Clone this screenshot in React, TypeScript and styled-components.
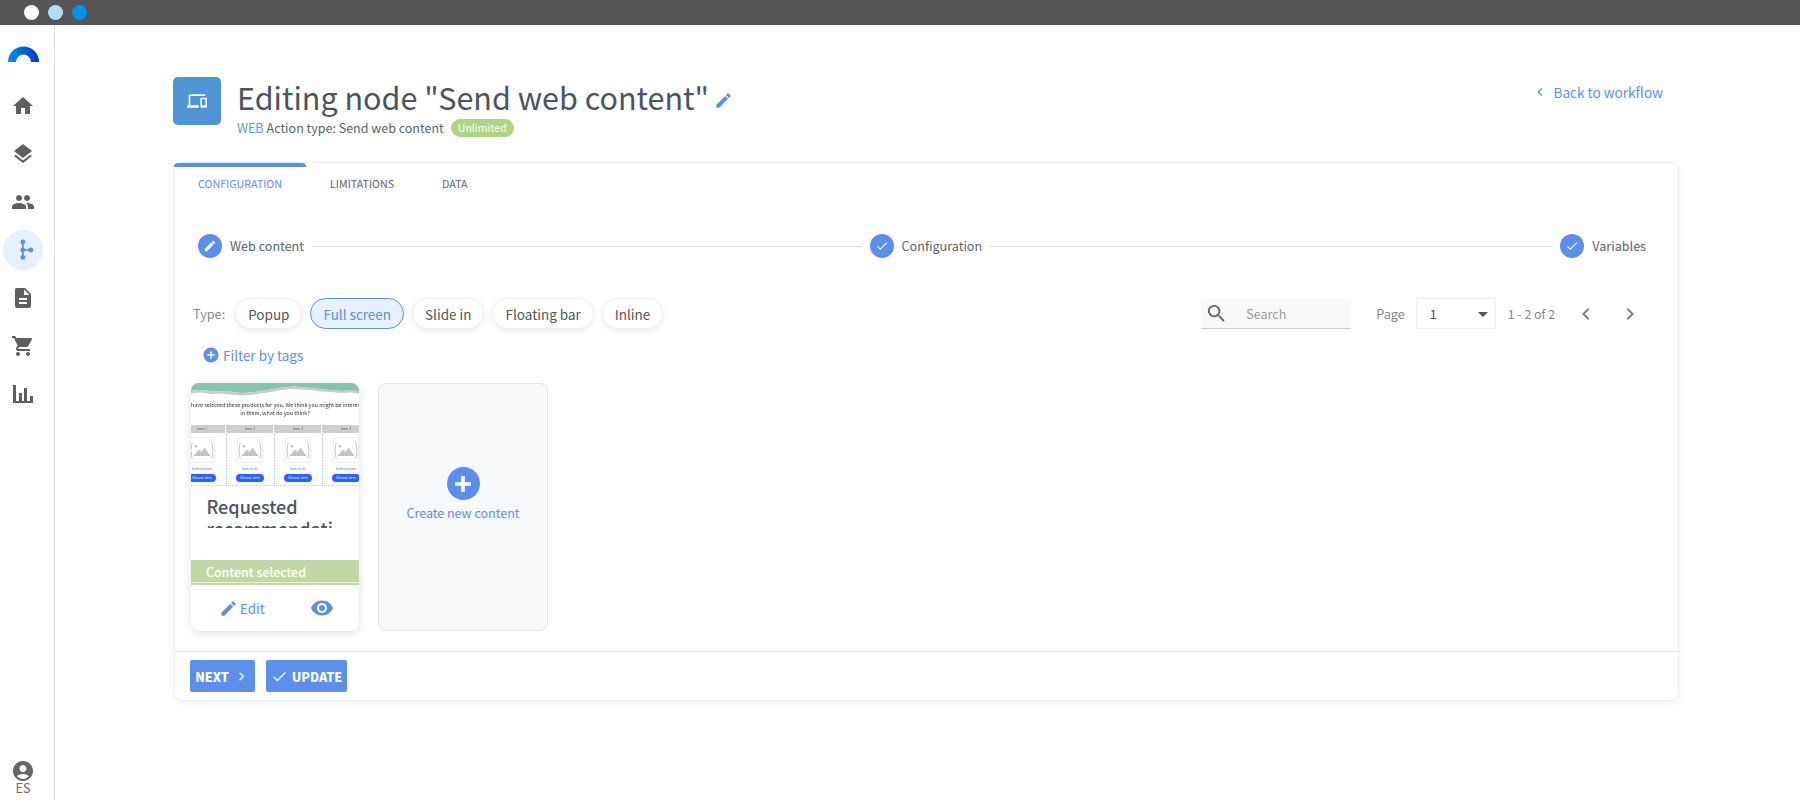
import styled, { createGlobalStyle } from 'styled-components';
import {
  MdAccountCircle,
  MdAddCircle,
  MdArrowDropDown,
  MdCheck,
  MdChevronLeft,
  MdChevronRight,
  MdDescription,
  MdDevices,
  MdEdit,
  MdHome,
  MdLayers,
  MdPeople,
  MdSearch,
  MdShoppingCart,
  MdVisibility,
} from 'react-icons/md';

const BLUE = '#5b8fec';
const FONT = '"Noto Sans CJK SC", "Noto Sans", sans-serif';

const GlobalStyle = createGlobalStyle`
  html, body {
    margin: 0;
    height: 100%;
    background: #fff;
    overflow: hidden;
  }
  body {
    font-family: ${FONT};
    color: #4a5560;
  }
  * {
    box-sizing: border-box;
  }
`;

// ventana y barra superior
const Screen = styled.div`
  display: flex;
  flex-direction: column;
  width: 1800px;
  height: 800px;
`;

const WindowBar = styled.div`
  display: flex;
  align-items: center;
  gap: 9px;
  flex: 0 0 25px;
  padding-left: 24px;
  background: #555555;
`;

const WindowDot = styled.span<{ $color: string }>`
  width: 15px;
  height: 15px;
  border-radius: 50%;
  background: ${(p) => p.$color};
`;

const Body = styled.div`
  display: flex;
  flex: 1;
  min-height: 0;
`;

const Sidebar = styled.nav`
  display: flex;
  flex-direction: column;
  flex: 0 0 55px;
  padding: 21px 0 0 3px;
  border-right: 1px solid #dddddd;
`;

const Logo = styled.svg`
  display: block;
  width: 31px;
  height: 16px;
  margin: 0 0 24px 5px;
`;

const NavList = styled.div`
  display: flex;
  flex-direction: column;
  gap: 8px;
`;

const NavItem = styled.div<{ $active?: boolean }>`
  display: flex;
  align-items: center;
  justify-content: center;
  width: 40px;
  height: 40px;
  border-radius: 50%;
  color: #5f5f5f;
  background: ${(p) => (p.$active ? '#e6f1fd' : 'transparent')};
  font-size: 24px;
`;

const UserBlock = styled.div`
  display: flex;
  flex-direction: column;
  align-items: center;
  width: 40px;
  margin-top: auto;
  padding-bottom: 5px;
  color: #666666;
  font-size: 24px;

  svg {
    display: block;
  }
`;

const UserCode = styled.span`
  margin-top: -2px;
  font-size: 12.6px;
  line-height: 14px;
`;

const Main = styled.main`
  flex: 1;
  padding: 52px 121px 0 119px;
`;

// cabecera del nodo
const Header = styled.header`
  display: flex;
  align-items: flex-start;
  height: 85px;
`;

const NodeIcon = styled.div`
  display: flex;
  align-items: center;
  justify-content: center;
  flex: 0 0 48px;
  height: 48px;
  margin: 0 16px 0 -1px;
  border-radius: 5px;
  background: #4f94d4;
  color: #fff;
  font-size: 20px;
`;

const HeaderText = styled.div`
  flex: 1;
`;

const TitleRow = styled.div`
  display: flex;
  align-items: center;
  gap: 5px;
  height: 42px;
`;

const Title = styled.h1`
  margin: -2px 0 0;
  font-size: 30.5px;
  font-weight: 400;
  line-height: 42px;
  color: #4a5560;
`;

const TitleEdit = styled.span`
  display: flex;
  color: ${BLUE};
  font-size: 19px;
  margin-top: 4px;
`;

const SubRow = styled.div`
  display: flex;
  align-items: center;
  height: 18px;
  font-size: 12.5px;
  line-height: 18px;
  color: #5a646e;
`;

const WebTag = styled.span`
  color: #5a9ae0;
  margin-right: 3px;
`;

const Badge = styled.span`
  display: inline-flex;
  align-items: center;
  height: 18px;
  margin-left: 7px;
  padding: 0 7px;
  border-radius: 9px;
  background: #aed581;
  color: #fff;
  font-size: 10.6px;
`;

const BackLink = styled.a`
  display: flex;
  align-items: center;
  gap: 4px;
  height: 18px;
  margin: 6px 16px 0 0;
  color: ${BLUE};
  font-size: 13.6px;
  line-height: 18px;
`;

const BackIcon = styled.span`
  display: flex;
  font-size: 16px;
  margin-right: 1px;
`;

// panel principal
const Panel = styled.section`
  display: flex;
  flex-direction: column;
  height: 539px;
  border: 1px solid #eeeeee;
  border-radius: 8px;
  box-shadow: 0 2px 8px rgba(0, 0, 0, 0.05);
`;

const Tabs = styled.div`
  display: flex;
  flex: 0 0 44px;
  margin-left: -1px;
`;

const Tab = styled.div<{ $active?: boolean }>`
  display: flex;
  align-items: center;
  padding: 0 24px 8px;
  border-top: 4px solid ${(p) => (p.$active ? BLUE : 'transparent')};
  border-radius: 4px 4px 0 0;
  color: ${(p) => (p.$active ? BLUE : '#5a646e')};
  font-size: 10.7px;
  text-transform: uppercase;
`;

const Stepper = styled.div`
  display: flex;
  align-items: center;
  gap: 8px;
  margin-top: 27px;
  padding: 0 32px 0 23px;
`;

const Step = styled.div`
  display: flex;
  align-items: center;
  gap: 8px;
  font-size: 12.6px;
  line-height: 24px;
  color: #5a646e;
`;

const StepCircle = styled.span`
  display: flex;
  align-items: center;
  justify-content: center;
  width: 24px;
  height: 24px;
  border-radius: 50%;
  background: ${BLUE};
  color: #fff;
  font-size: 14px;
`;

const StepLine = styled.div<{ $grow: number }>`
  flex: ${(p) => p.$grow} 1 0;
  height: 1px;
  background: #dddddd;
`;

const Toolbar = styled.div`
  display: flex;
  align-items: center;
  justify-content: space-between;
  height: 31px;
  margin-top: 40px;
  padding: 0 36px 0 18px;
`;

const TypeGroup = styled.div`
  display: flex;
  align-items: center;
  gap: 8px;
`;

const TypeLabel = styled.span`
  margin-right: 2px;
  color: #888888;
  font-size: 12.7px;
`;

const Pill = styled.button<{ $active?: boolean }>`
  height: 31px;
  padding: 0 12px;
  border: 1px solid ${(p) => (p.$active ? BLUE : '#f0f0f0')};
  border-radius: 16px;
  background: ${(p) => (p.$active ? '#e6f1fd' : '#fff')};
  box-shadow: ${(p) => (p.$active ? 'none' : '0 2px 6px rgba(0, 0, 0, 0.08)')};
  color: ${(p) => (p.$active ? BLUE : '#555555')};
  font-family: ${FONT};
  font-size: 13.5px;
`;

const PagerGroup = styled.div`
  display: flex;
  align-items: center;
`;

const SearchBox = styled.div`
  display: flex;
  align-items: center;
  width: 150px;
  height: 31px;
  margin-right: 25px;
  padding-left: 4px;
  border-bottom: 1px solid #cccccc;
  background: #f9f9f9;
  color: #666666;
  font-size: 23px;
`;

const SearchText = styled.span`
  margin-left: 18px;
  color: #999999;
  font-size: 12.6px;
`;

const PageLabel = styled.span`
  margin-right: 11px;
  color: #888888;
  font-size: 12.7px;
`;

const PageSelect = styled.div`
  display: flex;
  align-items: center;
  justify-content: space-between;
  width: 80px;
  height: 31px;
  margin-right: 12px;
  padding: 0 0 0 13px;
  border: 1px solid #eeeeee;
  color: #4a5560;
  font-size: 12.6px;
`;

const CaretIcon = styled.span`
  display: flex;
  color: #4a5560;
  font-size: 24px;
`;

const PageRange = styled.span`
  margin-right: 19px;
  color: #888888;
  font-size: 12.3px;
`;

const PagerButton = styled.span`
  display: flex;
  color: #808080;
  font-size: 24px;

  & + & {
    margin-left: 20px;
  }
`;

const FilterLink = styled.div`
  display: flex;
  align-items: center;
  gap: 3px;
  height: 20px;
  margin: 16px 0 0 27px;
  color: ${BLUE};
  font-size: 13.5px;
`;

const FilterIcon = styled.span`
  display: flex;
  font-size: 18px;
`;

const CardRow = styled.div`
  display: flex;
  gap: 19px;
  margin-top: 18px;
  padding-left: 16px;
`;

const ContentCard = styled.article`
  display: flex;
  flex-direction: column;
  width: 168px;
  height: 248px;
  border-radius: 8px;
  overflow: hidden;
  background: #fff;
  box-shadow: 0 2px 10px rgba(0, 0, 0, 0.12);
`;

// miniatura del contenido
const Thumb = styled.div`
  flex: 0 0 103px;
  overflow: hidden;
  border-bottom: 1px dotted #c8c8c8;
  filter: blur(0.25px);
`;

const TornEdge = styled.svg`
  display: block;
  width: 168px;
  height: 18px;
`;

const ThumbText = styled.div`
  display: flex;
  flex-direction: column;
  align-items: center;
  height: 24px;
  padding-top: 1px;
  color: #333333;
  font-size: 5.4px;
  line-height: 7.5px;
  white-space: nowrap;
  overflow: hidden;
`;

const ThumbTextStart = styled.span`
  align-self: flex-start;
`;

const ThumbColumns = styled.div`
  display: flex;
  justify-content: center;
`;

const ThumbColumn = styled.div`
  display: flex;
  flex-direction: column;
  align-items: center;
  flex: 0 0 48px;
  height: 61px;
  border-right: 1px dotted #bbbbbb;
  padding-right: 1px;
`;

const ThumbHeader = styled.div`
  align-self: stretch;
  height: 8px;
  background: #cdd0d2;
  color: #666666;
  font-size: 3.5px;
  line-height: 8px;
  text-align: center;
`;

const ThumbImage = styled.svg`
  display: block;
  width: 26px;
  height: 26px;
  margin-top: 4px;
`;

const ThumbLink = styled.div`
  margin-top: 3px;
  color: #4a74f0;
  font-size: 3.4px;
  line-height: 6px;
`;

const ThumbButton = styled.div`
  width: 28px;
  height: 8px;
  margin-top: 2px;
  border-radius: 4px;
  background: #2962ff;
  color: #fff;
  font-size: 3.4px;
  line-height: 8px;
  text-align: center;
  white-space: nowrap;
`;

const CardTitle = styled.h2`
  flex: 0 0 33px;
  height: 33px;
  margin: 9px 18px 0 15.5px;
  overflow: hidden;
  color: #4a5560;
  font-size: 18px;
  font-weight: 500;
  line-height: 22px;
  overflow-wrap: anywhere;
`;

const SelectedStrip = styled.div`
  display: flex;
  align-items: center;
  height: 25px;
  margin-top: auto;
  padding: 1px 15px 0;
  border-bottom: 2px solid #c3d7a4;
  box-shadow: inset 0 -1px 0 #e9f0dc;
  background: #c3d7a4;
  color: #fff;
  font-size: 12.4px;
  font-weight: 500;
`;

const CardActions = styled.div`
  display: flex;
  align-items: center;
  justify-content: space-between;
  flex: 0 0 46px;
  padding: 0 25px 0 28px;
  color: ${BLUE};
  font-size: 13.4px;
`;

const EditAction = styled.span`
  display: flex;
  align-items: center;
  gap: 2px;
`;

const ActionIcon = styled.span<{ $size: number }>`
  display: flex;
  font-size: ${(p) => p.$size}px;
`;

const CreateCard = styled.article`
  display: flex;
  flex-direction: column;
  align-items: center;
  width: 170px;
  height: 248px;
  padding-top: 83px;
  border: 1px solid #e6e6e6;
  border-radius: 8px;
  background: #f8f9fb;
  color: ${BLUE};
  font-size: 12.5px;
`;

const CreateCircle = styled.span`
  display: flex;
  align-items: center;
  justify-content: center;
  width: 33px;
  height: 33px;
  border-radius: 50%;
  background: ${BLUE};
`;

const CreateLabel = styled.span`
  margin-top: 3px;
  line-height: 20px;
`;

const Footer = styled.div`
  display: flex;
  align-items: center;
  gap: 11px;
  margin-top: auto;
  height: 49px;
  padding: 0 0 0 15px;
  border-top: 1px solid #e8e8e8;
`;

const ActionButton = styled.button`
  display: flex;
  align-items: center;
  justify-content: center;
  gap: 4px;
  height: 32px;
  padding: 0;
  border: none;
  border-radius: 2px;
  background: ${BLUE};
  color: #fff;
  font-family: ${FONT};
  font-size: 12.6px;
  font-weight: 900;
`;

const NextButton = styled(ActionButton)`
  width: 65px;
`;

const UpdateButton = styled(ActionButton)`
  width: 81px;
`;

const ButtonIcon = styled.span`
  display: flex;
  font-size: 17px;
`;

function WorkflowIcon() {
  return (
    <svg width="24" height="24" viewBox="0 0 24 24" fill={BLUE} aria-hidden="true">
      <rect x="10.9" y="4" width="1.8" height="16" />
      <rect x="12" y="11.1" width="8" height="1.8" />
      <circle cx="11.8" cy="3.9" r="2.4" />
      <circle cx="11.8" cy="12" r="2.4" />
      <circle cx="11.8" cy="19.4" r="2.4" />
      <circle cx="19.8" cy="12" r="2.4" />
    </svg>
  );
}

function ChartIcon() {
  return (
    <svg width="20" height="18" viewBox="0 0 20 18" fill="#5f5f5f" aria-hidden="true">
      <rect x="0" y="16" width="20" height="2" />
      <rect x="0" y="0" width="3" height="17" />
      <rect x="6" y="8" width="3" height="9" />
      <rect x="11" y="3" width="3" height="14" />
      <rect x="17" y="11" width="3" height="6" />
    </svg>
  );
}

function ThumbPlaceholder() {
  return (
    <ThumbImage viewBox="0 0 26 26" aria-hidden="true">
      <rect x="0.5" y="0.5" width="25" height="25" fill="#fff" stroke="#eeeeee" />
      <path d="M4 6 Q2.5 6 2.5 8 V12 L1.5 13.5 L2.5 15 V19 Q2.5 21 4 21" fill="none" stroke="#aaaaaa" strokeWidth="0.6" />
      <path d="M22 6 Q23.5 6 23.5 8 V12 L24.5 13.5 L23.5 15 V19 Q23.5 21 22 21" fill="none" stroke="#aaaaaa" strokeWidth="0.6" />
      <circle cx="7" cy="9.3" r="1.4" fill="#c0c5c9" />
      <path d="M4.5 19 L10 12.5 L12.5 15 L15.5 10.5 L21.5 19 Z" fill="#c0c5c9" />
    </ThumbImage>
  );
}

const thumbItems = [
  { head: 'Item 1', link: 'Lorem ipsum', cta: 'Choose item' },
  { head: 'Item 2', link: 'Sum in sit', cta: 'Choose item' },
  { head: 'Item 3', link: 'Sum in sit', cta: 'Choose item' },
  { head: 'Item 4', link: 'Lorem ipsum', cta: 'Choose item' },
];

const pills = ['Popup', 'Full screen', 'Slide in', 'Floating bar', 'Inline'];

function App() {
  return (
    <Screen>
      <GlobalStyle />
      <WindowBar>
        <WindowDot $color="#ffffff" />
        <WindowDot $color="#b3dcfb" />
        <WindowDot $color="#0091ea" />
      </WindowBar>
      <Body>
        <Sidebar>
          <Logo viewBox="0 0 31 16" aria-hidden="true">
            <defs>
              <linearGradient id="logoGrad" x1="0" x2="1" y1="0" y2="0">
                <stop offset="0" stopColor="#0091ea" />
                <stop offset="1" stopColor="#0033cc" />
              </linearGradient>
            </defs>
            <path d="M0 16 A15.5 15.5 0 0 1 31 16 H23 A7.5 7.5 0 0 0 8 16 Z" fill="url(#logoGrad)" />
          </Logo>
          <NavList>
            <NavItem><MdHome /></NavItem>
            <NavItem><MdLayers /></NavItem>
            <NavItem><MdPeople /></NavItem>
            <NavItem $active><WorkflowIcon /></NavItem>
            <NavItem><MdDescription /></NavItem>
            <NavItem><MdShoppingCart /></NavItem>
            <NavItem><ChartIcon /></NavItem>
          </NavList>
          <UserBlock>
            <MdAccountCircle />
            <UserCode>ES</UserCode>
          </UserBlock>
        </Sidebar>
        <Main>
          <Header>
            <NodeIcon><MdDevices /></NodeIcon>
            <HeaderText>
              <TitleRow>
                <Title>Editing node "Send web content"</Title>
                <TitleEdit><MdEdit /></TitleEdit>
              </TitleRow>
              <SubRow>
                <WebTag>WEB</WebTag>
                Action type: Send web content
                <Badge>Unlimited</Badge>
              </SubRow>
            </HeaderText>
            <BackLink>
              <BackIcon><MdChevronLeft /></BackIcon>
              Back to workflow
            </BackLink>
          </Header>
          <Panel>
            <Tabs>
              <Tab $active>Configuration</Tab>
              <Tab>Limitations</Tab>
              <Tab>Data</Tab>
            </Tabs>
            <Stepper>
              <Step>
                <StepCircle><MdEdit /></StepCircle>
                Web content
              </Step>
              <StepLine $grow={479} />
              <Step>
                <StepCircle><MdCheck /></StepCircle>
                Configuration
              </Step>
              <StepLine $grow={490} />
              <Step>
                <StepCircle><MdCheck /></StepCircle>
                Variables
              </Step>
            </Stepper>
            <Toolbar>
              <TypeGroup>
                <TypeLabel>Type:</TypeLabel>
                {pills.map((pill) => (
                  <Pill key={pill} $active={pill === 'Full screen'}>{pill}</Pill>
                ))}
              </TypeGroup>
              <PagerGroup>
                <SearchBox>
                  <MdSearch />
                  <SearchText>Search</SearchText>
                </SearchBox>
                <PageLabel>Page</PageLabel>
                <PageSelect>
                  1
                  <CaretIcon><MdArrowDropDown /></CaretIcon>
                </PageSelect>
                <PageRange>1 - 2 of 2</PageRange>
                <PagerButton><MdChevronLeft /></PagerButton>
                <PagerButton><MdChevronRight /></PagerButton>
              </PagerGroup>
            </Toolbar>
            <FilterLink>
              <FilterIcon><MdAddCircle /></FilterIcon>
              Filter by tags
            </FilterLink>
            <CardRow>
              <ContentCard>
                <Thumb>
                  <TornEdge viewBox="0 0 168 18" aria-hidden="true">
                    <path d="M0 0 H168 V8 L158 7.5 L150 8 L140 7 L130 6.5 L122 5 L112 4.5 L104 3.5 L96 4 L88 5 L80 6.5 L70 8 L60 9.5 L50 10 L42 9 L34 8 L24 8.5 L14 7.5 L6 7 L0 8 Z" fill="#84c5b0" />
                    <path d="M0 8 L6 7 L14 7.5 L24 8.5 L34 8 L42 9 L50 10 L60 9.5 L70 8 L80 6.5 L88 5 L96 4 L104 3.5 L112 4.5 L122 5 L130 6.5 L140 7 L150 8 L158 7.5 L168 8 V10.5 L160 9.5 L150 10 L140 9 L130 8.5 L120 7 L110 6.5 L100 6 L90 7 L80 9 L70 10.5 L60 12 L50 12.5 L40 11.5 L30 10.5 L20 11 L10 9.5 L0 10.5 Z" fill="#cacaca" />
                  </TornEdge>
                  <ThumbText>
                    <ThumbTextStart>have selected these products for you. We think you might be interested</ThumbTextStart>
                    <span>in them, what do you think?</span>
                  </ThumbText>
                  <ThumbColumns>
                    {thumbItems.map((item) => (
                      <ThumbColumn key={item.head}>
                        <ThumbHeader>{item.head}</ThumbHeader>
                        <ThumbPlaceholder />
                        <ThumbLink>{item.link}</ThumbLink>
                        <ThumbButton>{item.cta}</ThumbButton>
                      </ThumbColumn>
                    ))}
                  </ThumbColumns>
                </Thumb>
                <CardTitle>Requested recommendations</CardTitle>
                <SelectedStrip>Content selected</SelectedStrip>
                <CardActions>
                  <EditAction>
                    <ActionIcon $size={19}><MdEdit /></ActionIcon>
                    Edit
                  </EditAction>
                  <ActionIcon $size={24}><MdVisibility /></ActionIcon>
                </CardActions>
              </ContentCard>
              <CreateCard>
                <CreateCircle>
                  <svg width="20" height="20" viewBox="0 0 20 20" aria-hidden="true">
                    <path d="M8.2 2h3.6v6.2H18v3.6h-6.2V18H8.2v-6.2H2V8.2h6.2z" fill="#fff" />
                  </svg>
                </CreateCircle>
                <CreateLabel>Create new content</CreateLabel>
              </CreateCard>
            </CardRow>
            <Footer>
              <NextButton>
                NEXT
                <ButtonIcon><MdChevronRight /></ButtonIcon>
              </NextButton>
              <UpdateButton>
                <ButtonIcon><MdCheck /></ButtonIcon>
                UPDATE
              </UpdateButton>
            </Footer>
          </Panel>
        </Main>
      </Body>
    </Screen>
  );
}

export default App;
